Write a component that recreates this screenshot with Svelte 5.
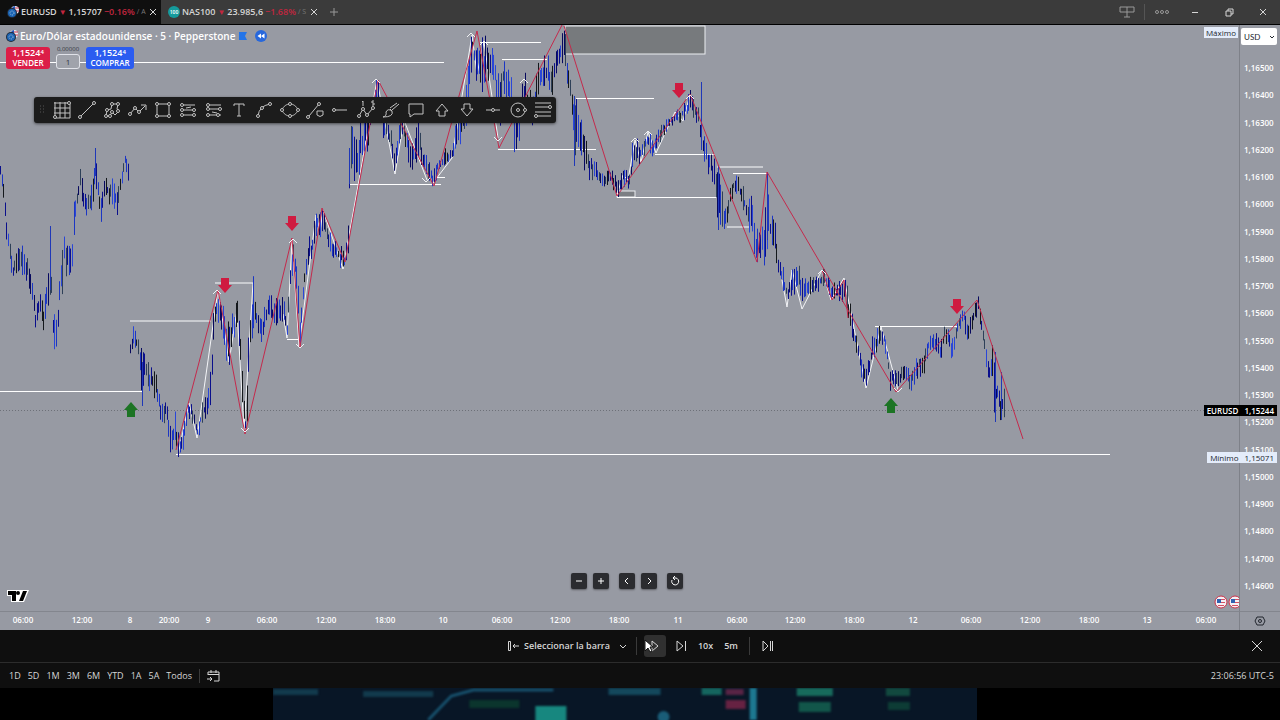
<script lang="ts">
  interface Bar {
    x: number
    top: number
    bottom: number
    color: string
  }

  // Envelope of the price action: x, high, low
  const envelope: number[][][] = [
    [
      [0, 168, 178], [3, 182, 200], [7, 222, 245], [13, 262, 281], [18, 247, 268], [23, 250, 275], [27, 257, 278],
      [32, 283, 302], [35, 308, 333], [39, 292, 310], [43, 305, 328], [47, 288, 310], [50, 225, 285], [53, 315, 345],
      [56, 325, 351], [59, 285, 310], [64, 228, 275], [68, 245, 270], [71, 255, 282], [74, 200, 245], [76, 188, 218],
      [80, 170, 190], [84, 188, 215], [88, 195, 218], [92, 185, 215], [95, 150, 180], [98, 185, 200], [101, 203, 223],
      [104, 182, 200], [107, 180, 200], [112, 182, 202], [117, 195, 214], [120, 178, 193], [125, 156, 165], [129, 168, 183]
    ],
    [
      [130, 342, 355], [133, 326, 340], [137, 335, 352], [142, 350, 400], [144, 345, 380], [148, 362, 390], [155, 375, 398],
      [160, 398, 418], [163, 405, 425], [166, 395, 410], [170, 425, 448], [175, 415, 445], [178, 435, 457], [182, 430, 453],
      [185, 415, 430], [188, 400, 415], [192, 405, 420], [197, 425, 440], [202, 405, 422], [207, 395, 412], [211, 370, 398],
      [213, 310, 350], [217, 290, 315], [219, 292, 325], [223, 310, 335], [229, 335, 378], [232, 320, 345], [237, 300, 330],
      [240, 335, 360], [243, 375, 430], [245, 420, 433], [247, 370, 420], [250, 310, 345], [253, 278, 320], [257, 310, 332],
      [262, 320, 347], [265, 305, 327], [269, 292, 312], [273, 305, 325], [277, 298, 320], [283, 300, 320], [287, 320, 340],
      [289, 280, 310], [292, 238, 265], [295, 255, 275], [298, 270, 325], [300, 320, 348], [302, 290, 310], [307, 245, 270],
      [312, 235, 255], [316, 210, 230], [319, 215, 240], [323, 208, 230], [327, 228, 245], [332, 240, 255], [337, 245, 262],
      [342, 250, 268], [345, 255, 270], [348, 225, 250], [349, 150, 200], [353, 110, 175], [357, 140, 175], [362, 120, 160],
      [369, 110, 140], [377, 80, 100], [382, 106, 135], [387, 115, 138], [395, 150, 173], [400, 118, 142], [405, 125, 143],
      [411, 150, 172], [418, 125, 155], [422, 150, 165], [427, 160, 175], [433, 172, 185], [438, 160, 172], [445, 150, 165],
      [451, 150, 163], [457, 118, 145], [467, 80, 125], [469, 55, 95], [472, 33, 50], [475, 45, 75], [482, 45, 85],
      [485, 38, 75], [490, 45, 75], [496, 65, 95], [499, 90, 145], [502, 62, 90], [510, 75, 100], [514, 100, 145],
      [517, 120, 145], [524, 75, 110], [532, 95, 130], [538, 65, 95], [547, 58, 80], [552, 70, 95], [557, 50, 75],
      [563, 26, 55], [565, 40, 80], [570, 80, 100], [574, 95, 160], [580, 118, 145], [587, 150, 178], [595, 162, 178],
      [603, 175, 187], [610, 170, 182], [617, 180, 196], [622, 170, 185], [630, 168, 188], [633, 138, 165], [640, 145, 165],
      [647, 132, 148], [653, 140, 155], [660, 125, 140], [670, 115, 125], [680, 108, 122], [687, 100, 115], [690, 93, 108],
      [698, 110, 125], [704, 140, 165], [709, 150, 172], [715, 165, 185], [718, 170, 228], [723, 200, 225], [727, 210, 230],
      [730, 190, 205], [734, 174, 190], [743, 188, 208], [748, 205, 222], [752, 190, 240], [756, 235, 262], [762, 228, 255],
      [764, 235, 262], [766, 175, 245], [770, 215, 240], [775, 225, 250], [778, 260, 272], [783, 270, 290], [787, 285, 305],
      [792, 270, 290], [800, 268, 295], [803, 280, 300], [808, 278, 292], [817, 275, 290], [824, 268, 285], [830, 285, 298],
      [837, 285, 300], [845, 278, 300], [850, 305, 330], [855, 330, 348], [861, 355, 375], [866, 370, 388], [872, 340, 362],
      [880, 325, 342], [885, 332, 350], [890, 365, 388], [897, 370, 385], [903, 368, 378], [911, 370, 390], [915, 358, 378],
      [923, 350, 372], [927, 338, 355], [935, 332, 350], [940, 345, 363], [944, 325, 340], [952, 340, 358], [957, 320, 335],
      [963, 308, 320], [967, 325, 342], [973, 310, 325], [978, 298, 315], [982, 320, 335], [987, 355, 380], [990, 365, 385],
      [992, 340, 375], [994, 370, 420], [998, 380, 400], [1000, 395, 420], [1004, 392, 415]
    ]
  ]

  // Single long wicks
  const spikes: number[][] = [
    [50, 226, 290], [95, 148, 176], [142, 362, 406], [349, 148, 184], [574, 96, 166], [701, 82, 150], [718, 166, 230],
    [767, 172, 240], [995, 352, 422], [1001, 372, 420]
  ]

  const palette = ['#2a46d8', '#1c36c4', '#0a0f8c', '#07095e', '#1c36c4', '#0a0f8c', '#14181c', '#2e4058']

  let seed = 7
  function random() {
    seed = (seed * 16807) % 2147483647
    return seed / 2147483647
  }

  function buildBars(points: number[][]): Bar[] {
    const bars: Bar[] = []
    let i = 0
    for (let x = points[0][0]; x <= points[points.length - 1][0]; x += 1.6) {
      while (i < points.length - 2 && points[i + 1][0] < x) i++
      const [x0, h0, l0] = points[i]
      const [x1, h1, l1] = points[i + 1]
      const t = Math.min(1, (x - x0) / (x1 - x0))
      const high = h0 + (h1 - h0) * t
      const low = l0 + (l1 - l0) * t
      const range = low - high
      bars.push({
        x: Math.round(x),
        top: high + range * (random() * 0.6 - 0.2),
        bottom: low - range * (random() * 0.6 - 0.2),
        color: palette[Math.floor(random() * palette.length)]
      })
    }
    return bars
  }

  const bars = envelope.flatMap(buildBars)

  // x1, x2, y
  const levels = [
    [0, 444, 62], [0, 142, 391], [287, 299, 339], [176, 1110, 454], [350, 441, 184], [437, 445, 177], [480, 541, 42],
    [502, 547, 59], [576, 654, 98], [498, 596, 149], [655, 715, 154], [617, 717, 197], [733, 767, 173], [875, 957, 326]
  ]
  const faintLevels = [[130, 211, 321], [215, 253, 283], [717, 763, 167], [727, 750, 227]]

  const redLines = [
    '176,450 218,290 245,434 292,238 300,347 322,208 345,262 378,80 434,186 477,31 499,148 562,25',
    '564,26 617,196 690,94 757,262 767,172 896,392 977,300 1023,439',
    '822,270 832,300 844,280 848,318'
  ]
  const whiteLines = [
    '178,455 189,403 197,438 218,290 229,362 237,310 244,430 253,283',
    '283,314 287,338 292,240 299,346 316,215 320,232 323,210 343,269 377,80 395,174 404,120 427,180',
    '433,183 452,158 472,35 477,74 484,42 498,138',
    '617,195 623,175 628,180 635,140 641,162 648,132 656,153 675,112 683,121 690,95',
    '782,280 787,307 792,270 802,309 822,270 831,300 844,278 866,388 881,327 898,390'
  ]
  const tips = [[217, 291], [293, 240], [376, 80], [471, 34], [484, 42], [524, 80], [635, 139], [648, 132], [690, 96], [822, 271]]
  const lowTips = [[245, 430], [300, 346], [426, 180], [498, 139], [898, 390]]

  const sellMarks = [[292, 216], [225, 278], [679, 83], [957, 299]]
  const buyMarks = [[131, 417], [891, 413]]

  const prices = Array.from({ length: 20 }, (_, i) => `1,${16500 - i * 100}`)

  // label, distance from the previous label
  const times: [string, number][] = [
    ['06:00', 23], ['12:00', 59], ['8', 48], ['20:00', 39], ['9', 39], ['06:00', 59], ['12:00', 59], ['18:00', 59],
    ['10', 58], ['06:00', 59], ['12:00', 58], ['18:00', 59], ['11', 59], ['06:00', 59], ['12:00', 58], ['18:00', 59],
    ['12', 59], ['06:00', 58], ['12:00', 59], ['18:00', 59], ['13', 58], ['06:00', 59]
  ]

  const ranges = ['1D', '5D', '1M', '3M', '6M', 'YTD', '1A', '5A', 'Todos']

  // Drawing tools: stroke path and anchor dots
  const tools: { name: string; path: string; dots?: number[][] }[] = [
    { name: 'Cuadrícula', path: 'M2 3H16M2 8H18M2 13H18M4 18H18M3 2V16M8 2V18M13 2V18M18 4V18', dots: [[17, 3], [3, 17]] },
    { name: 'Línea de tendencia', path: 'M4 16L16 4', dots: [[3, 17], [17, 3]] },
    { name: 'Pincel de forma', path: 'M4 16L5 10L9 9L10 4L16 4L15 9L17 11L13 15L10 12L8 16Z', dots: [[4, 16], [5, 10], [10, 4], [16, 4], [16, 11], [10, 12], [8, 16]] },
    { name: 'Polilínea', path: 'M2 14L7 8L11 12L17 6M13 5H18V10', dots: [[2, 14], [7, 8], [11, 12]] },
    { name: 'Rectángulo', path: 'M4 4H16V16H4Z', dots: [[4, 4], [16, 4], [4, 16], [16, 16]] },
    { name: 'Posición larga', path: 'M4 5H17M4 10H17M4 15H17M8 8L13 7', dots: [[4, 5], [16, 10], [4, 10], [4, 15], [16, 15]] },
    { name: 'Posición corta', path: 'M4 5H17M4 9H17M4 15H17M8 12L13 13', dots: [[4, 5], [4, 9], [16, 9], [4, 15], [14, 15]] },
    { name: 'Texto', path: 'M5 6V4H15V6M10 4V16M8 16H12' },
    { name: 'Curva', path: 'M4 16Q5 6 16 4', dots: [[4, 16], [8, 8], [16, 4]] },
    { name: 'Elipse', path: 'M2 10C5 2 15 2 18 10C15 18 5 18 2 10', dots: [[2, 10], [18, 10], [10, 4], [10, 16]] },
    { name: 'Trazo y forma', path: 'M4 16L14 4M12 11H18V15Q15 18 12 15Z', dots: [[3, 17], [14, 4]] },
    { name: 'Rayo horizontal', path: 'M5 10H17', dots: [[4, 10]] },
    { name: 'Ondas de Elliott', path: 'M3 16L7 9L11 15L17 8M6 2L7 1V6M18 1H16V3H18V5H16', dots: [[3, 16], [7, 9], [11, 15], [17, 8]] },
    { name: 'Pincel', path: 'M2 17Q6 16 5 12Q7 8 11 11Q13 17 2 17M9 9L11 11M11 10L18 4M9 8L16 3' },
    { name: 'Comentario', path: 'M3 4H17V14H8L4 17V14H3Z' },
    { name: 'Flecha arriba', path: 'M10 4L16 11H13V16H7V11H4Z' },
    { name: 'Flecha abajo', path: 'M10 16L16 9H13V4H7V9H4Z' },
    { name: 'Línea horizontal', path: 'M3 10H17', dots: [[10, 10]] },
    { name: 'Círculo', path: 'M17 10A7 7 0 1 1 3 10A7 7 0 1 1 17 10', dots: [[10, 10], [17, 10]] },
    { name: 'Retroceso de Fibonacci', path: 'M2 3H18M2 7H16M2 12H18M4 16H18', dots: [[17, 7], [3, 16]] }
  ]

  const navigation = [
    { name: 'Alejar', path: 'M5 8H11' },
    { name: 'Acercar', path: 'M5 8H11M8 5V11' },
    { name: 'Desplazar a la izquierda', path: 'M9 5L6 8L9 11' },
    { name: 'Desplazar a la derecha', path: 'M7 5L10 8L7 11' },
    { name: 'Restablecer gráfico', path: 'M5 7A3.500 3.500 0 1 0 9 5H6M8 3L6 5L8 7' }
  ]

  let quantity = $state('1')
  let currency = $state('USD')
</script>

{#snippet pairIcon()}
  <svg class="pair" viewBox="0 0 12 12" aria-hidden="true">
    <circle cx="8" cy="4" r="4" fill="#e8ecf4" />
    <path d="M8 0A4 4 0 0 0 5 2V4H8Z" fill="#2857b8" />
    <path d="M8 2H12M8 5H12" stroke="#cc3348" />
    <circle cx="5" cy="7" r="5" fill="#1f2a3a" />
    <circle cx="5" cy="7" r="4" fill="#1b64b4" />
    <circle cx="5" cy="7" r="2" fill="none" stroke="#a5c4dc" stroke-dasharray="1 1" />
  </svg>
{/snippet}

<div class="app">
  <header class="tabs">
    <div class="tab active">
      {@render pairIcon()}
      <span class="symbol">EURUSD</span>
      <span class="down">▼</span>
      <span>1,15707</span>
      <span class="change">−0.16%</span>
      <span class="faded">/ A</span>
      <button class="close" aria-label="Cerrar EURUSD">
        <svg viewBox="0 0 8 8"><path d="M1 1L7 7M7 1L1 7" /></svg>
      </button>
    </div>
    <div class="tab">
      <span class="hundred">100</span>
      <span class="symbol">NAS100</span>
      <span class="down">▼</span>
      <span>23.985,6</span>
      <span class="change">−1.68%</span>
      <span class="faded">/ S</span>
      <button class="close" aria-label="Cerrar NAS100">
        <svg viewBox="0 0 8 8"><path d="M1 1L7 7M7 1L1 7" /></svg>
      </button>
    </div>
    <button class="add" aria-label="Nueva pestaña">
      <svg viewBox="0 0 10 10"><path d="M5 1V9M1 5H9" /></svg>
    </button>
    <div class="window">
      <button class="layout" aria-label="Diseño">
        <svg viewBox="0 0 16 12"><path d="M1 1H15V6H1ZM8 1V11M5 11H11" /></svg>
      </button>
      <button class="more" aria-label="Más">
        <svg viewBox="0 0 14 6"><circle cx="2" cy="3" r="1.500" /><circle cx="7" cy="3" r="1.500" /><circle cx="12" cy="3" r="1.500" /></svg>
      </button>
      <button aria-label="Minimizar"><svg viewBox="0 0 10 10"><path d="M2 5.500H8" /></svg></button>
      <button aria-label="Restaurar"><svg viewBox="0 0 10 10"><path d="M2 4H7V9H2ZM4 4V2H9V7H7" /></svg></button>
      <button aria-label="Cerrar"><svg viewBox="0 0 10 10"><path d="M2 2L8 8M8 2L2 8" /></svg></button>
    </div>
  </header>

  <main class="workspace">
    <section class="chart">
      <svg class="plot" viewBox="0 25 1239 586" preserveAspectRatio="none" aria-label="Gráfico EURUSD">
        <path class="last-price" d="M0 410.500H1239" />
        <rect x="565" y="26" width="140" height="28" fill="#777a7d" stroke="#eceef2" />
        <rect x="617" y="191" width="18" height="6" fill="#7c7f84" stroke="#eceef2" />
        {#each levels as [x1, x2, y]}
          <path class="level" d="M{x1} {y + 0.5}H{x2}" />
        {/each}
        {#each faintLevels as [x1, x2, y]}
          <path class="level faint" d="M{x1} {y}H{x2}" />
        {/each}
        {#each whiteLines as points}
          <polyline class="white" {points} />
        {/each}
        {#each bars as bar}
          <path d="M{bar.x + 0.5} {bar.top}V{bar.bottom}" stroke={bar.color} />
        {/each}
        {#each spikes as [x, top, bottom]}
          <path d="M{x + 0.5} {top}V{bottom}" stroke="#1f38b8" />
        {/each}
        {#each redLines as points}
          <polyline class="red" {points} />
        {/each}
        {#each tips as [x, y]}
          <path class="tip" d="M{x - 4} {y + 3}L{x} {y - 1}L{x + 4} {y + 3}" />
        {/each}
        {#each lowTips as [x, y]}
          <path class="tip" d="M{x - 4} {y - 2}L{x} {y + 2}L{x + 4} {y - 2}" />
        {/each}
        {#each sellMarks as [x, y]}
          <path d="M{x - 4} {y}h8v7h3l-7 8l-7 -8h3z" fill="#cf1b40" />
        {/each}
        {#each buyMarks as [x, y]}
          <path d="M{x - 4} {y}h8v-7h3l-7 -8l-7 8h3z" fill="#1c7424" />
        {/each}
        {#each [1221, 1235] as x}
          <circle cx={x} cy="602" r="6" fill="#f4f0f4" stroke="#cc3048" />
          <path d="M{x - 4} 599.500H{x + 4}M{x - 4} 602.500H{x + 4}M{x - 3} 605.500H{x + 3}" stroke="#d45064" />
          <path d="M{x - 4} 599H{x}V603H{x - 4}Z" fill="#2f62b0" />
        {/each}
      </svg>

      <div class="legend">
        <div class="title">
          {@render pairIcon()}
          <span>Euro/Dólar estadounidense · 5 · Pepperstone</span>
          <svg class="flag" viewBox="0 0 8 8" aria-hidden="true"><path d="M0 0H8L6 4L8 8H0Z" /></svg>
          <svg class="rewind" viewBox="0 0 12 12" aria-hidden="true">
            <circle cx="6" cy="6" r="6" />
            <path d="M6 3.500V8.500L2.500 6ZM9.500 3.500V8.500L6 6Z" fill="#fff" />
          </svg>
        </div>
        <div class="orders">
          <button class="order sell"><b>1,1524<sup>4</sup></b>VENDER</button>
          <label class="quantity"><span>0,00000</span><input bind:value={quantity} aria-label="Cantidad" /></label>
          <button class="order buy"><b>1,1524<sup>4</sup></b>COMPRAR</button>
        </div>
      </div>

      <div class="toolbar">
        <svg class="grip" viewBox="0 0 6 10" aria-hidden="true">
          <path d="M1 1h1M4 1h1M1 4h1M4 4h1M1 7h1M4 7h1" />
        </svg>
        {#each tools as tool}
          <button aria-label={tool.name} title={tool.name}>
            <svg viewBox="0 0 20 20">
              <path d={tool.path} />
              {#each tool.dots ?? [] as [cx, cy]}
                <circle {cx} {cy} r="1.500" />
              {/each}
            </svg>
          </button>
        {/each}
      </div>

      <div class="navigation">
        {#each navigation as item}
          <button aria-label={item.name}><svg viewBox="0 0 16 16"><path d={item.path} /></svg></button>
        {/each}
      </div>

      <svg class="brand" viewBox="0 0 24 14" aria-label="TradingView">
        <path d="M1 1H23L18 13H5V7H1Z" fill="#fff" />
        <path d="M2 2H10V12H6V6H2ZM17 2H21L17 12H13ZM12 2A2 2 0 1 1 12 6A2 2 0 1 1 12 2" fill="#000" />
      </svg>
      <span class="tag maximum">Máximo</span>
    </section>

    <aside class="prices">
      <div class="currency">
        <select bind:value={currency} aria-label="Divisa">
          <option>USD</option>
          <option>EUR</option>
        </select>
        <svg viewBox="0 0 6 4" aria-hidden="true"><path d="M1 1L3 3L5 1" /></svg>
      </div>
      <div class="scale">
        {#each prices as price}
          <span>{price}</span>
        {/each}
      </div>
      <div class="tag current"><span>EURUSD</span><span>1,15244</span></div>
      <div class="tag minimum"><span>Mínimo</span><span>1,15071</span></div>
    </aside>

    <div class="times">
      {#each times as [label, gap]}
        <span class="tick" style="flex-grow: {gap}"><span>{label}</span></span>
      {/each}
      <span class="rest"></span>
    </div>
    <button class="settings" aria-label="Configuración">
      <svg viewBox="0 0 12 12"><path d="M3 2H9L11 6L9 10H3L1 6Z" /><circle cx="6" cy="6" r="1.500" /></svg>
    </button>
  </main>

  <section class="replay">
    <div class="controls">
      <button class="select-bar">
        <svg viewBox="0 0 12 12"><path d="M1.500 1.500H3.500V10.500H1.500ZM6 6H12M8 4L6 6L8 8" /></svg>
        Seleccionar la barra
        <svg class="chevron" viewBox="0 0 8 8"><path d="M1 3L4 6L7 3" /></svg>
      </button>
      <i class="divider"></i>
      <button class="play" aria-label="Reproducir">
        <svg viewBox="0 0 12 12"><path d="M3 1L9 6L3 11Z" /></svg>
        <svg class="cursor" viewBox="0 0 10 14" aria-hidden="true"><path d="M1 1V12L4 9L6 13L8 12L6 8H9Z" /></svg>
      </button>
      <button class="step" aria-label="Avanzar"><svg viewBox="0 0 12 12"><path d="M2 1L8 6L2 11ZM10.500 1V11" /></svg></button>
      <button class="speed">10x</button>
      <button class="interval">5m</button>
      <i class="divider"></i>
      <button class="step" aria-label="Ir al tiempo real"><svg viewBox="0 0 12 12"><path d="M1 1L6 6L1 11ZM8.500 1V11M10.500 1V11" /></svg></button>
    </div>
    <button class="exit" aria-label="Salir"><svg viewBox="0 0 12 12"><path d="M1 1L11 11M11 1L1 11" /></svg></button>
  </section>

  <section class="ranges">
    {#each ranges as range}
      <button>{range}</button>
    {/each}
    <i class="divider"></i>
    <button class="calendar" aria-label="Ir a la fecha">
      <svg viewBox="0 0 14 14"><path d="M2 6V3H13V12H8M2 5.500H13M5 1V4M10 1V4M1 10H6M4 8L6 10L4 12" /></svg>
    </button>
    <time>23:06:56 UTC-5</time>
  </section>

  <footer>
    <svg viewBox="0 0 703 32" preserveAspectRatio="none" aria-hidden="true">
      <rect width="703" height="32" fill="#081626" />
      <g class="glow">
        <path d="M155 32L178 8L200 2H280" stroke="#17516d" stroke-width="3" fill="none" />
        <path d="M0 4H45M90 6H160" stroke="#123a4c" stroke-width="6" />
        <rect x="262" y="18" width="31" height="18" fill="#17877f" />
        <rect x="335" y="0" width="52" height="7" fill="#14485c" />
        <rect x="196" y="12" width="50" height="8" fill="#0b352d" />
        <rect x="428" y="0" width="20" height="7" fill="#15665f" />
        <rect x="452" y="1" width="18" height="6" fill="#582445" />
        <rect x="452" y="12" width="20" height="9" fill="#662242" />
        <rect x="476" y="0" width="7" height="32" fill="#1d7890" />
        <rect x="523" y="0" width="36" height="8" fill="#176a5c" />
        <rect x="525" y="14" width="32" height="10" fill="#12564a" />
        <rect x="612" y="0" width="24" height="8" fill="#12493f" />
        <rect x="614" y="14" width="22" height="8" fill="#0d3c35" />
        <circle cx="390" cy="29" r="6" fill="#1a5d78" />
      </g>
    </svg>
  </footer>
</div>

<style>
  :global(body) {
    margin: 0;
    background: #000;
  }

  .app {
    display: flex;
    flex-direction: column;
    min-height: 100vh;
    background: #0f0f0f;
    color: #d6d6d6;
    font-family: 'Trebuchet MS', 'Open Sans', 'Noto Sans', sans-serif;
    font-size: 9px;
    line-height: 12px;
    overflow: hidden;
  }

  button {
    display: flex;
    align-items: center;
    justify-content: center;
    padding: 0;
    border: 0;
    background: none;
    color: inherit;
    font: inherit;
    cursor: pointer;
  }

  svg {
    display: block;
    flex: none;
  }

  button svg {
    fill: none;
    stroke: currentColor;
  }

  .divider {
    width: 1px;
    height: 18px;
    background: #3a3a3a;
  }

  .pair {
    width: 12px;
    height: 12px;
  }

  /* Tabs */
  .tabs {
    display: flex;
    height: 24px;
    border-bottom: 1px solid #000;
    background: #3b3b3b;
  }

  .tab {
    box-sizing: border-box;
    display: flex;
    align-items: center;
    gap: 2px;
    width: 161px;
    padding: 0 4px 0 7px;
    font-weight: 600;
    white-space: nowrap;
  }

  .tab.active {
    background: #0f0f0f;
  }

  .tab .down,
  .tab .change {
    color: #c2263f;
  }

  .tab .down {
    font-size: 8px;
  }

  .faded {
    color: #777;
    font-size: 7px;
    font-weight: 400;
  }

  .hundred {
    flex: none;
    width: 12px;
    border-radius: 6px;
    background: #159a9c;
    color: #fff;
    font-size: 5px;
    text-align: center;
  }

  .close {
    margin-left: auto;
  }

  .close svg {
    width: 8px;
    height: 8px;
  }

  .add {
    width: 24px;
  }

  .add svg {
    width: 10px;
    height: 10px;
    color: #999;
  }

  .window {
    display: flex;
    align-items: center;
    margin-left: auto;
  }

  .window button {
    width: 34px;
    height: 24px;
  }

  .window svg {
    width: 10px;
    height: 10px;
  }

  .window .layout svg {
    width: 16px;
    height: 12px;
    color: #999;
  }

  .window .more svg {
    width: 14px;
    height: 6px;
    color: #999;
  }

  .window .more {
    height: 16px;
    border-left: 1px solid #555;
  }

  /* Chart */
  .workspace {
    flex: 1;
    display: grid;
    grid-template-columns: 1fr 41px;
    grid-template-rows: 1fr 19px;
    background: #979aa3;
    color: #fff;
    font-size: 8px;
    font-weight: 600;
  }

  .chart {
    position: relative;
    min-height: 300px;
  }

  .plot {
    position: absolute;
    width: 100%;
    height: 100%;
    fill: none;
  }

  .level {
    stroke: #fff;
  }

  .level.faint {
    stroke: #c9cbd0;
    stroke-width: 2;
  }

  .white {
    stroke: #f4f5f8;
  }

  .red {
    stroke: #c42a4c;
  }

  .tip {
    stroke: #f1f2f5;
  }

  .last-price {
    stroke: #6d7078;
    stroke-dasharray: 1 2;
  }

  .legend {
    position: absolute;
    top: 5px;
    left: 6px;
  }

  .title {
    display: flex;
    align-items: center;
    gap: 2px;
    font-size: 10px;
  }

  .flag {
    width: 8px;
    height: 8px;
    margin-left: 2px;
    fill: #2374e8;
  }

  .rewind {
    width: 12px;
    height: 12px;
    margin-left: 6px;
    fill: #2868dc;
  }

  .orders {
    display: flex;
    gap: 6px;
    margin-top: 5px;
  }

  .order {
    flex-direction: column;
    width: 44px;
    height: 22px;
    border-radius: 3px;
    color: #fff;
    font-size: 8px;
    line-height: 10px;
  }

  .order b {
    font-size: 9px;
    font-weight: 600;
  }

  .order sup {
    font-size: 6px;
    line-height: 1px;
    vertical-align: 2px;
  }

  .sell {
    background: #dc1e48;
  }

  .buy {
    width: 48px;
    background: #2b5cf0;
  }

  .quantity {
    width: 24px;
    margin-top: -2px;
    color: #33363e;
    font-size: 6px;
    font-weight: 400;
    line-height: 9px;
    text-align: center;
  }

  .quantity span {
    display: block;
  }

  .quantity input {
    box-sizing: border-box;
    display: block;
    width: 24px;
    height: 15px;
    padding: 0;
    border: 1px solid #e0e2e8;
    border-radius: 3px;
    background: #a0a3ab;
    color: #33363e;
    font: 8px 'Open Sans', sans-serif;
    text-align: center;
  }

  .toolbar {
    position: absolute;
    top: 72px;
    left: 34px;
    display: flex;
    align-items: center;
    width: 522px;
    height: 26px;
    border-radius: 3px;
    background: #1c1c1c;
    box-shadow: 0 1px 3px #0008;
  }

  .toolbar button {
    flex: 1;
    color: #c2c2c2;
  }

  .toolbar button svg {
    width: 20px;
    height: 20px;
  }

  .toolbar circle {
    fill: #1c1c1c;
  }

  .grip {
    width: 6px;
    height: 10px;
    margin: 0 4px 0 5px;
    stroke: #555;
  }

  .navigation {
    position: absolute;
    bottom: 22px;
    left: calc(46% + 1px);
    display: flex;
    gap: 6px;
  }

  .navigation button {
    width: 16px;
    height: 16px;
    border-radius: 2px;
    background: #2b2c30;
    box-shadow: 0 1px 2px #0006;
  }

  .navigation button:nth-child(3),
  .navigation button:nth-child(5) {
    margin-left: 4px;
  }

  .brand {
    position: absolute;
    bottom: 8px;
    left: 6px;
    width: 24px;
    height: 14px;
  }

  .tag {
    position: absolute;
    background: #e4ecfa;
    color: #22262e;
    font-size: 8px;
    line-height: 11px;
  }

  .maximum {
    top: 2px;
    right: 1px;
    padding: 0 2px;
    font-weight: 400;
  }

  .prices {
    position: relative;
    display: flex;
    flex-direction: column;
    border-left: 1px solid #7e8189;
  }

  .currency {
    display: flex;
    align-items: center;
    width: 36px;
    height: 17px;
    margin: 3px 1px 0;
    border-radius: 2px;
    background: #fff;
  }

  .currency select {
    flex: 1;
    min-width: 0;
    height: 17px;
    padding: 0 0 0 3px;
    border: 0;
    background: none;
    color: #22262e;
    font: 8px Lato, 'Open Sans', sans-serif;
    appearance: none;
  }

  .currency svg {
    width: 6px;
    height: 4px;
    margin-right: 2px;
    fill: none;
    stroke: #22262e;
  }

  .scale {
    flex: 1;
    display: flex;
    flex-direction: column;
    justify-content: space-between;
    padding: 17px 5px 19px 4px;
  }

  .current,
  .minimum {
    right: 3px;
    display: flex;
    gap: 6px;
    padding: 0 3px;
  }

  .current {
    top: calc(65% - 1px);
    background: #000;
    color: #fff;
  }

  .minimum {
    top: calc(73% - 1px);
    font-weight: 400;
  }

  .times {
    display: flex;
    align-items: center;
    padding-bottom: 2px;
    border-top: 1px solid #83868e;
  }

  .tick {
    flex: 1 0 0;
    display: flex;
    justify-content: flex-end;
  }

  .tick span {
    display: flex;
    justify-content: center;
    width: 0;
    white-space: nowrap;
  }

  .rest {
    flex: 33 0 0;
  }

  .settings {
    border-top: 1px solid #83868e;
    border-left: 1px solid #7e8189;
    color: #22262e;
  }

  .settings svg {
    width: 12px;
    height: 12px;
  }

  /* Replay */
  .replay {
    display: flex;
    align-items: center;
    height: 32px;
    border-bottom: 1px solid #2c2c2c;
    font-weight: 600;
  }

  .controls {
    flex: 1;
    display: flex;
    align-items: center;
    justify-content: center;
    padding-left: 47px;
  }

  .controls svg {
    width: 12px;
    height: 12px;
  }

  .select-bar {
    gap: 5px;
    margin-right: 9px;
  }

  .controls .chevron {
    width: 8px;
    height: 8px;
    margin-left: 4px;
  }

  .play {
    position: relative;
    width: 22px;
    height: 22px;
    margin: 0 9px 0 7px;
    border-radius: 3px;
    background: #303030;
  }

  .play .cursor {
    position: absolute;
    top: 4px;
    left: 0;
    width: 10px;
    height: 14px;
    fill: #fff;
    stroke: #111;
  }

  .speed {
    margin: 0 11px;
  }

  .interval {
    margin-right: 11px;
  }

  .controls .step:last-child {
    margin-left: 12px;
  }

  .exit {
    width: 46px;
  }

  .exit svg {
    width: 12px;
    height: 12px;
  }

  .ranges {
    display: flex;
    align-items: center;
    gap: 7px;
    height: 25px;
    padding: 0 6px 0 9px;
  }

  .ranges .divider {
    height: 14px;
    margin-right: -1px;
  }

  .calendar svg {
    width: 14px;
    height: 14px;
  }

  time {
    margin-left: auto;
  }

  footer {
    height: 32px;
    background: #000;
  }

  footer svg {
    width: 55%;
    height: 32px;
    margin-left: 21.3%;
  }

  .glow {
    filter: blur(1px);
  }
</style>
